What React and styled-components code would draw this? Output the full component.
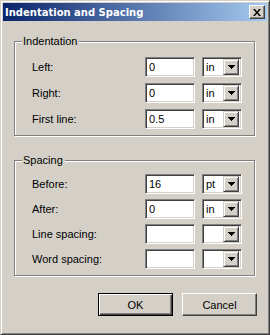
import React from "react";
import styled, { createGlobalStyle } from "styled-components";

const GlobalStyle = createGlobalStyle`
  html, body {
    margin: 0;
    padding: 0;
    background: #d4d0c8;
  }
  * {
    box-sizing: border-box;
  }
`;

const Window = styled.div`
  width: 270px;
  height: 335px;
  background: #d4d0c8;
  border: 1px solid;
  border-color: #d4d0c8 #404040 #404040 #d4d0c8;
  box-shadow: inset 1px 1px 0 #fff, inset -1px -1px 0 #808080;
  padding: 2px;
  display: flex;
  flex-direction: column;
  font-family: "Liberation Sans", Arial, sans-serif;
  font-size: 11px;
  color: #000;
`;

const TitleBar = styled.div`
  height: 18px;
  background: linear-gradient(to right, #0a246a, #a6caf0);
  display: flex;
  align-items: center;
  justify-content: space-between;
  padding: 0 2px 0 2px;
`;

const Title = styled.span`
  color: #fff;
  font-family: "DejaVu Sans", Verdana, sans-serif;
  font-weight: bold;
  font-size: 10px;
  letter-spacing: 0;
  padding-top: 1px;
`;

const CloseButton = styled.div`
  width: 16px;
  height: 14px;
  background: #d4d0c8;
  border: 1px solid;
  border-color: #fff #404040 #404040 #fff;
  box-shadow: inset -1px -1px 0 #808080;
  display: flex;
  align-items: center;
  justify-content: center;
`;

const Content = styled.div`
  flex: 1;
  display: flex;
  flex-direction: column;
  padding: 20px 11px 0 11px;
`;

const Group = styled.div`
  position: relative;
  border: 1px solid #808080;
  box-shadow: 1px 1px 0 #fff, inset 1px 1px 0 #fff;
  margin-top: ${(p) => p.$top}px;
  margin-right: 1px;
  padding: ${(p) => p.$padTop}px 12px 6px 17px;
  display: grid;
  grid-template-columns: 1fr 50px 40px;
  column-gap: 7px;
  row-gap: ${(p) => p.$gap}px;
`;

const Legend = styled.span`
  position: absolute;
  top: -7px;
  left: 7px;
  padding: 0 2px 0 1px;
  background: #d4d0c8;
  line-height: 13px;
`;

const Label = styled.span`
  align-self: center;
  line-height: 13px;
`;

const Field = styled.div`
  height: 20px;
  background: #fff;
  border: 1px solid;
  border-color: #808080 #fff #fff #808080;
  box-shadow: inset 1px 1px 0 #404040, inset -1px -1px 0 #d4d0c8;
  padding: 0 2px 0 3px;
  display: flex;
  align-items: center;
  line-height: 13px;
`;

const Combo = styled(Field)`
  padding-right: 2px;
  justify-content: space-between;
`;

const DropButton = styled.div`
  width: 16px;
  height: 16px;
  background: #d4d0c8;
  border: 1px solid;
  border-color: #d4d0c8 #404040 #404040 #d4d0c8;
  box-shadow: inset 1px 1px 0 #fff, inset -1px -1px 0 #808080;
  display: flex;
  align-items: center;
  justify-content: center;
`;

const ButtonRow = styled.div`
  display: flex;
  justify-content: flex-end;
  gap: 9px;
  margin-top: 17px;
  margin-right: -1px;
`;

const Button = styled.div`
  width: 75px;
  height: 23px;
  display: flex;
  align-items: center;
  justify-content: center;
  background: #d4d0c8;
  border: 1px solid;
  border-color: ${(p) => (p.$default ? "#000" : "#fff #404040 #404040 #fff")};
  box-shadow: ${(p) =>
    p.$default
      ? "inset 1px 1px 0 #fff, inset -1px -1px 0 #404040, inset -2px -2px 0 #808080"
      : "inset -1px -1px 0 #808080"};
  font-size: 11px;
`;

const Arrow = () => (
  <svg width="7" height="4" viewBox="0 0 7 4">
    <path d="M0 0h7v1h-1v1h-1v1h-1v1h-1v-1h-1v-1h-1v-1h-1z" fill="#000" />
  </svg>
);

const CloseGlyph = () => (
  <svg width="8" height="7" viewBox="0 0 8 7">
    <path
      d="M0 0h2l2 2.5 2-2.5h2l-3 3.5 3 3.5h-2l-2-2.5-2 2.5h-2l3-3.5z"
      fill="#000"
    />
  </svg>
);

const FieldRow = ({ label, value, unit }) => (
  <>
    <Label>{label}</Label>
    <Field>{value}</Field>
    <Combo>
      <span>{unit}</span>
      <DropButton>
        <Arrow />
      </DropButton>
    </Combo>
  </>
);

const indentation = [
  { label: "Left:", value: "0", unit: "in" },
  { label: "Right:", value: "0", unit: "in" },
  { label: "First line:", value: "0.5", unit: "in" },
];

const spacing = [
  { label: "Before:", value: "16", unit: "pt" },
  { label: "After:", value: "0", unit: "in" },
  { label: "Line spacing:", value: "", unit: "" },
  { label: "Word spacing:", value: "", unit: "" },
];

export default function App() {
  return (
    <>
      <GlobalStyle />
      <Window>
        <TitleBar>
          <Title>Indentation and Spacing</Title>
          <CloseButton>
            <CloseGlyph />
          </CloseButton>
        </TitleBar>
        <Content>
          <Group $top={0} $padTop={15} $gap={6}>
            <Legend>Indentation</Legend>
            {indentation.map((r) => (
              <FieldRow key={r.label} {...r} />
            ))}
          </Group>
          <Group $top={24} $padTop={13} $gap={5}>
            <Legend>Spacing</Legend>
            {spacing.map((r) => (
              <FieldRow key={r.label} {...r} />
            ))}
          </Group>
          <ButtonRow>
            <Button $default>OK</Button>
            <Button>Cancel</Button>
          </ButtonRow>
        </Content>
      </Window>
    </>
  );
}
